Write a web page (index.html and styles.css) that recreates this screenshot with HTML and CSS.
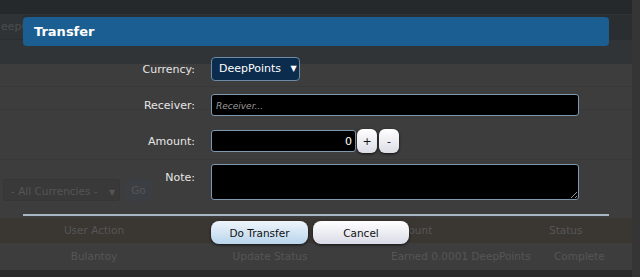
FILE: index.html
```html
<!DOCTYPE html>
<html lang="en">
<head>
    <meta charset="UTF-8">
    <title>Transfer</title>
    <link rel="stylesheet" href="styles.css">
</head>
<body>
    <div class="page">
        <div class="topbar"></div>
        <div class="tabs"><span class="tab">eepO</span></div>
        <div class="subbar"></div>
        <div class="content">
            <div class="line-row"></div>
            <div class="line-row"></div>
            <div class="line-row tall"></div>
            <div class="filter">
                <div class="filter-select">- All Currencies - <span class="arrow">&#9660;</span></div>
                <div class="filter-go">Go</div>
            </div>
            <div class="grid head">
                <div class="c1">User Action</div>
                <div class="c2"></div>
                <div class="c3">Amount</div>
                <div class="c4">Status</div>
            </div>
            <div class="grid">
                <div class="c1">Bulantoy</div>
                <div class="c2">Update Status</div>
                <div class="c3">Earned 0.0001 DeepPoints</div>
                <div class="c4 complete">Complete</div>
            </div>
        </div>
        <div class="footer"></div>
    </div>

    <div class="modal">
        <div class="modal-title">Transfer</div>
        <form class="modal-form">
            <div class="row row-currency">
                <label>Currency:</label>
                <div class="select">DeepPoints <span class="caret">&#9660;</span></div>
            </div>
            <div class="row row-receiver">
                <label for="receiver">Receiver:</label>
                <input type="text" id="receiver" class="field wide" placeholder="Receiver...">
            </div>
            <div class="row row-amount">
                <label for="amount">Amount:</label>
                <input type="text" id="amount" class="field amount" value="0">
                <button type="button" class="step">+</button>
                <button type="button" class="step">-</button>
            </div>
            <div class="row row-note">
                <label for="note">Note:</label>
                <textarea id="note" class="field wide note"></textarea>
            </div>
            <div class="divider"></div>
            <div class="actions">
                <button type="button" class="btn btn-go">Do Transfer</button>
                <button type="button" class="btn btn-cancel">Cancel</button>
            </div>
        </form>
    </div>
</body>
</html>
```

FILE: styles.css
```css
html, body {
    margin: 0;
    padding: 0;
    height: 100%;
    overflow: hidden;
}
body {
    font-family: "DejaVu Sans", Verdana, sans-serif;
    background-color: #3d3d3d;
    position: relative;
}
.page {
    width: 640px;
    height: 277px;
    display: flex;
    flex-direction: column;
    border-right: 8px solid #353535;
    box-sizing: border-box;
}
.topbar {
    height: 14px;
    background-color: #26292c;
}
.tabs {
    height: 26px;
    background-color: #2b2e31;
    border-top: 1px solid #303336;
    box-sizing: border-box;
}
.tab {
    display: inline-block;
    width: 22px;
    height: 24px;
    line-height: 24px;
    padding-left: 1px;
    font-size: 11px;
    color: #4a4d50;
    background-color: #303336;
    white-space: nowrap;
}
.subbar {
    height: 24px;
    background-color: #313437;
}
.content {
    flex: 1;
    background-color: #3d3d3d;
}
.line-row {
    height: 22px;
    border-bottom: 1px solid #383838;
}
.line-row.tall {
    height: 49px;
}
.filter {
    display: flex;
    gap: 5px;
    padding: 19px 0 0 3px;
    height: 57px;
    box-sizing: border-box;
}
.filter-select {
    width: 117px;
    height: 22px;
    line-height: 22px;
    box-sizing: border-box;
    padding-left: 7px;
    font-size: 10.5px;
    color: #555;
    background-color: #393939;
    border: 1px solid #363636;
    border-radius: 3px;
}
.filter-select .arrow {
    font-size: 8px;
    margin-left: 8px;
}
.filter-go {
    width: 27px;
    height: 22px;
    line-height: 22px;
    text-align: center;
    font-size: 10.5px;
    color: #555;
    background-color: #3b3f44;
    border-radius: 4px;
}
.grid {
    display: grid;
    grid-template-columns: 188px 164px 193px 1fr;
    height: 26px;
    line-height: 26px;
    font-size: 10.5px;
    color: #565656;
}
.grid.head {
    margin-top: 1px;
    background-color: #3a3632;
    height: 25px;
    line-height: 25px;
}
.c1, .c2 {
    text-align: center;
}
.c3 {
    padding-left: 39px;
}
.c4 {
    padding-left: 4px;
}
.complete {
    padding-left: 9px;
}
.footer {
    height: 7px;
    background-color: #2a2a2a;
}

/* transfer dialog */
.modal {
    position: absolute;
    left: 23px;
    top: 17px;
    width: 586px;
}
.modal-title {
    height: 29px;
    line-height: 29px;
    padding-left: 11px;
    background-color: #1a5e92;
    border-radius: 4px;
    color: #fff;
    font-weight: bold;
    font-size: 13px;
}
.modal-form {
    margin: 0;
    padding-top: 11px;
}
.row {
    display: flex;
    align-items: center;
}
.row label {
    width: 188px;
    text-align: right;
    padding-right: 16px;
    box-sizing: border-box;
    font-size: 11px;
    color: #e6e6e6;
}
.row-receiver {
    margin-top: 13px;
}
.row-amount {
    margin-top: 13px;
}
.row-note {
    margin-top: 11px;
    align-items: flex-start;
}
.row-note label {
    padding-top: 7px;
}
.select {
    width: 89px;
    height: 24px;
    line-height: 22px;
    box-sizing: border-box;
    padding-left: 7px;
    font-size: 11px;
    color: #fff;
    background-color: #0c2c4d;
    border: 1px solid #6d8aa6;
    border-radius: 4px;
}
.caret {
    font-size: 8px;
    margin-left: 6px;
    vertical-align: 1px;
}
.field {
    display: block;
    height: 22px;
    box-sizing: border-box;
    background-color: #000;
    border: 1px solid #7c99b1;
    border-radius: 3px;
    color: #fff;
    font-family: "DejaVu Sans", Verdana, sans-serif;
    font-size: 11px;
    padding: 0 4px;
    margin: 0;
    outline: none;
}
.field::placeholder {
    color: #9a9a9a;
    font-style: italic;
    font-size: 9px;
}
.wide {
    width: 368px;
}
.amount {
    width: 145px;
    text-align: right;
    padding-right: 3px;
}
.note {
    height: 36px;
    resize: vertical;
}
.step {
    width: 20px;
    height: 24px;
    margin: 0 0 0 1px;
    padding: 0;
    border: none;
    border-radius: 6px;
    background: linear-gradient(#ffffff, #dcdce6);
    box-shadow: 0 1px 3px rgba(0, 0, 0, 0.7);
    font-family: "DejaVu Sans", Verdana, sans-serif;
    font-size: 11px;
    color: #111;
}
.step + .step {
    margin-left: 2px;
}
.divider {
    height: 2px;
    background-color: #a7b6c4;
    margin-top: 14px;
}
.actions {
    display: flex;
    gap: 5px;
    padding: 5px 0 0 188px;
}
.btn {
    width: 97px;
    height: 23px;
    padding: 0;
    border: none;
    border-radius: 8px;
    box-shadow: 0 1px 3px rgba(0, 0, 0, 0.7);
    font-family: "DejaVu Sans", Verdana, sans-serif;
    font-size: 10.5px;
    color: #111;
}
.btn-go {
    background: linear-gradient(#eef5fb, #b9d5ec);
}
.btn-cancel {
    width: 96px;
    background: linear-gradient(#ffffff, #dadbe7);
}
```
